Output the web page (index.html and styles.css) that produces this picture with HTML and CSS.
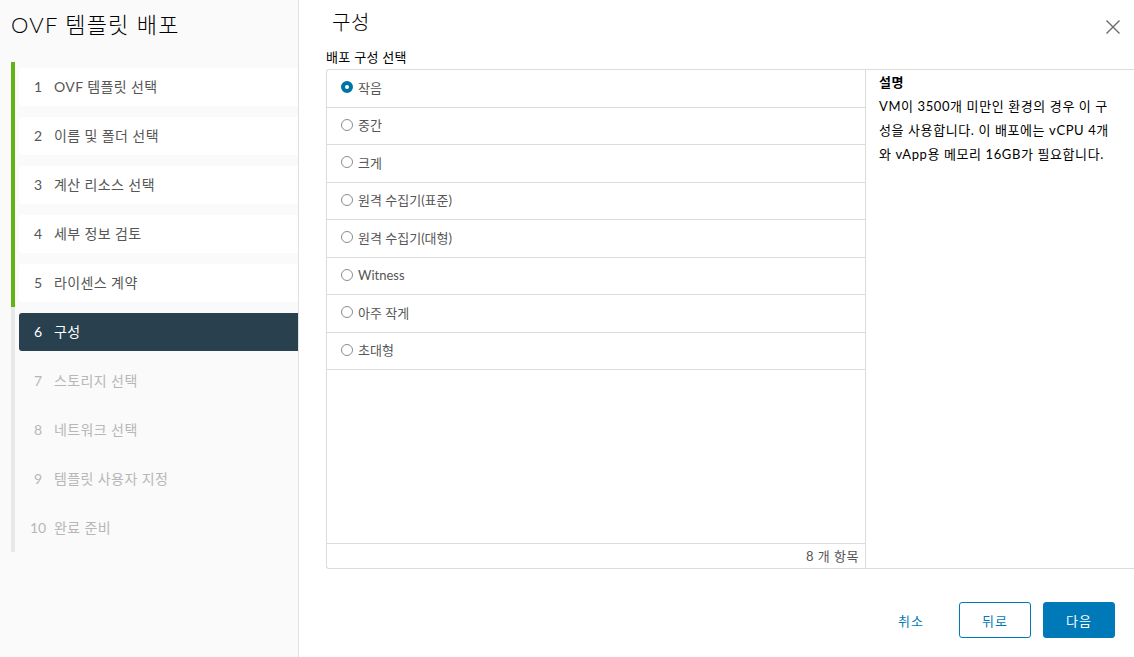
FILE: index.html
```html
<!DOCTYPE html>
<html lang="ko">
<head>
<meta charset="utf-8">
<title>OVF 템플릿 배포</title>
<link rel="stylesheet" href="styles.css">
</head>
<body>
<div class="wizard">
  <aside class="sidebar">
    <h1 class="wiz-title">OVF 템플릿 배포</h1>
    <ol class="steps">
      <li class="step done"><div class="step-box"><span class="num">1</span><span class="lbl">OVF 템플릿 선택</span></div></li>
      <li class="step done"><div class="step-box"><span class="num">2</span><span class="lbl">이름 및 폴더 선택</span></div></li>
      <li class="step done"><div class="step-box"><span class="num">3</span><span class="lbl">계산 리소스 선택</span></div></li>
      <li class="step done"><div class="step-box"><span class="num">4</span><span class="lbl">세부 정보 검토</span></div></li>
      <li class="step done"><div class="step-box"><span class="num">5</span><span class="lbl">라이센스 계약</span></div></li>
      <li class="step active"><div class="step-box"><span class="num">6</span><span class="lbl">구성</span></div></li>
      <li class="step todo"><div class="step-box"><span class="num">7</span><span class="lbl">스토리지 선택</span></div></li>
      <li class="step todo"><div class="step-box"><span class="num">8</span><span class="lbl">네트워크 선택</span></div></li>
      <li class="step todo"><div class="step-box"><span class="num">9</span><span class="lbl">템플릿 사용자 지정</span></div></li>
      <li class="step todo"><div class="step-box"><span class="num">10</span><span class="lbl">완료 준비</span></div></li>
    </ol>
  </aside>
  <main class="content">
    <header class="head">
      <h2 class="page-title">구성</h2>
      <button class="close" aria-label="닫기">
        <svg width="16" height="16" viewBox="0 0 16 16"><path d="M1.5 1.5 L14.5 14.5 M14.5 1.5 L1.5 14.5" stroke="#6a6a6a" stroke-width="1.4" fill="none"/></svg>
      </button>
    </header>
    <div class="section-label">배포 구성 선택</div>
    <div class="config">
      <div class="list">
        <div class="rows">
          <label class="row"><span class="radio checked"></span>작음</label>
          <label class="row"><span class="radio"></span>중간</label>
          <label class="row"><span class="radio"></span>크게</label>
          <label class="row"><span class="radio"></span>원격 수집기(표준)</label>
          <label class="row"><span class="radio"></span>원격 수집기(대형)</label>
          <label class="row"><span class="radio"></span>Witness</label>
          <label class="row"><span class="radio"></span>아주 작게</label>
          <label class="row"><span class="radio"></span>초대형</label>
        </div>
        <div class="list-foot">8 개 항목</div>
      </div>
      <div class="desc">
        <div class="desc-title">설명</div>
        <p class="desc-text">VM이 3500개 미만인 환경의 경우 이 구성을 사용합니다. 이 배포에는 vCPU 4개와 vApp용 메모리 16GB가 필요합니다.</p>
      </div>
    </div>
    <footer class="actions">
      <button class="btn btn-link">취소</button>
      <button class="btn btn-outline">뒤로</button>
      <button class="btn btn-primary">다음</button>
    </footer>
  </main>
</div>
</body>
</html>
```
FILE: styles.css
```css
* { box-sizing: border-box; }
html, body { margin: 0; padding: 0; }
body {
  width: 1134px;
  height: 657px;
  overflow: hidden;
  font-family: Lato, "Noto Sans CJK KR", sans-serif;
  color: #565656;
  background: #fff;
}
.wizard {
  display: flex;
  height: 657px;
}
.sidebar {
  width: 299px;
  flex: none;
  background: #fafafa;
  border-right: 1px solid #e0e0e0;
  padding: 11px 0 0 11px;
}
.wiz-title {
  margin: 0;
  font-weight: 300;
  font-size: 22px;
  line-height: 28px;
  color: #000;
  letter-spacing: 1.2px;
}
.steps {
  list-style: none;
  margin: 23px 0 0 0;
  padding: 0;
}
.step {
  padding: 6px 0 5px 4px;
  border-left: 4px solid #e8e8e8;
}
.step.done { border-left-color: #60b515; }
.step-box {
  height: 38px;
  display: flex;
  align-items: center;
  border-radius: 3px 0 0 3px;
  padding-left: 9px;
  padding-bottom: 2px;
  font-size: 14px;
  letter-spacing: 0.4px;
}
.num {
  width: 20px;
  text-align: center;
  margin-right: 6px;
  letter-spacing: 0;
}
.done .step-box { background: #fff; color: #565656; }
.active .step-box { background: #29404f; color: #fff; }
.todo .step-box { color: #b7b7b7; }
.content {
  flex: 1;
  display: flex;
  flex-direction: column;
  padding-left: 27px;
  min-width: 0;
}
.head {
  height: 48px;
  display: flex;
  justify-content: space-between;
  align-items: flex-start;
  padding-right: 13px;
}
.page-title {
  margin: 0;
  padding: 10px 0 0 6px;
  font-size: 20px;
  line-height: 24px;
  font-weight: 300;
  color: #000;
  letter-spacing: 0.5px;
}
.close {
  margin-top: 19px;
  border: 0;
  background: none;
  padding: 0;
  width: 16px;
  height: 16px;
  display: block;
}
.close svg { display: block; }
.section-label {
  font-size: 13px;
  line-height: 18px;
  color: #000;
  margin-bottom: 3px;
  letter-spacing: 0.3px;
}
.config {
  height: 500px;
  display: flex;
  border-top: 1px solid #dcdcdc;
  border-bottom: 1px solid #dcdcdc;
  border-left: 1px solid #dcdcdc;
  border-radius: 3px 0 0 3px;
}
.list {
  width: 539px;
  flex: none;
  display: flex;
  flex-direction: column;
  border-right: 1px solid #dcdcdc;
}
.rows { flex: 1; }
.row {
  height: 37.5px;
  border-bottom: 1px solid #dcdcdc;
  display: flex;
  align-items: center;
  padding-left: 14px;
  padding-bottom: 2px;
  font-size: 13px;
  color: #565656;
}
.radio {
  width: 12px;
  height: 12px;
  border: 1px solid #8c8c8c;
  border-radius: 50%;
  background: #fff;
  margin-right: 5px;
  flex: none;
}
.radio.checked {
  border: 4px solid #0072a3;
}
.list-foot {
  height: 25px;
  border-top: 1px solid #dcdcdc;
  text-align: right;
  font-size: 13px;
  line-height: 24px;
  padding-right: 6px;
  color: #565656;
  letter-spacing: 0.5px;
}
.desc {
  flex: 1;
  padding: 0 20px 0 13px;
  font-size: 13px;
  line-height: 24px;
  color: #000;
  letter-spacing: 0.6px;
}
.desc-title { font-weight: 700; }
.desc-text { margin: 0; }
.actions {
  flex: 1;
  display: flex;
  justify-content: flex-end;
  align-items: flex-end;
  gap: 12px;
  padding: 0 19px 19px 0;
}
.btn {
  width: 72px;
  height: 36px;
  border-radius: 3px;
  font-family: Lato, "Noto Sans CJK KR", sans-serif;
  font-size: 13px;
  letter-spacing: 1px;
  padding: 0;
  cursor: pointer;
}
.btn-link { border: 1px solid transparent; background: none; color: #0079b8; }
.btn-outline { border: 1px solid #0079b8; background: #fff; color: #0079b8; }
.btn-primary { border: 1px solid #0079b8; background: #0079b8; color: #fff; }
```
